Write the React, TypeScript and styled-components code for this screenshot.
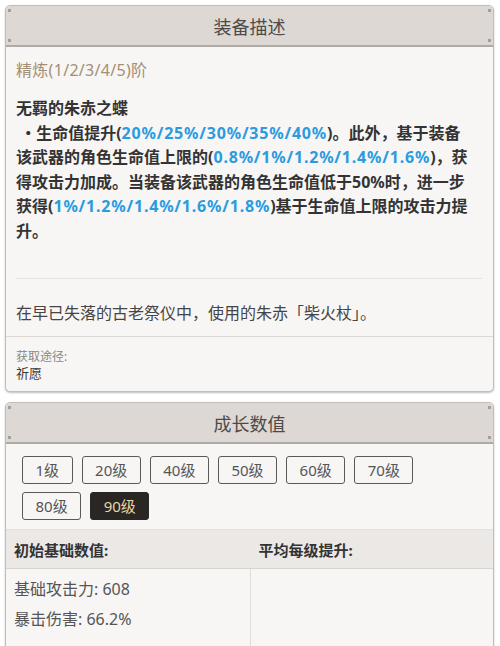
import React from 'react';
import styled, { createGlobalStyle } from 'styled-components';

const GlobalStyle = createGlobalStyle`
  body {
    margin: 0;
    background: #ffffff;
    font-family: "Noto Sans", "Noto Sans CJK SC", sans-serif;
  }
`;

const levels = ['1级', '20级', '40级', '50级', '60级', '70级', '80级', '90级'];
const activeLevel = '90级';

export default function App() {
  return (
    <>
      <GlobalStyle />
      <Page>
        <Card>
          <Header>
            <Corner $top $left />
            <Corner $left />
            <Corner $top />
            <Corner />
            装备描述
          </Header>
          <DescBody>
            <Refine>精炼(1/2/3/4/5)阶</Refine>
            <Effect>
              无羁的朱赤之蝶
              <br />
              &nbsp;・生命值提升(<Hl>20%/25%/30%/35%/40%</Hl>)。此外，基于装备
              <br />
              该武器的角色生命值上限的(<Hl>0.8%/1%/1.2%/1.4%/1.6%</Hl>)，获
              <br />
              得攻击力加成。当装备该武器的角色生命值低于50%时，进一步
              <br />
              获得(<Hl>1%/1.2%/1.4%/1.6%/1.8%</Hl>)基于生命值上限的攻击力提
              <br />
              升。
            </Effect>
            <Story>在早已失落的古老祭仪中，使用的朱赤「柴火杖」。</Story>
          </DescBody>
          <Source>
            <SourceLabel>获取途径:</SourceLabel>
            <SourceValue>祈愿</SourceValue>
          </Source>
        </Card>

        <Card>
          <Header>
            <Corner $top $left />
            <Corner $left />
            <Corner $top />
            <Corner />
            成长数值
          </Header>
          <Levels>
            {levels.map(l => (
              <LevelButton key={l} $active={l === activeLevel}>
                {l}
              </LevelButton>
            ))}
          </Levels>
          <StatTable>
            <StatHead>初始基础数值:</StatHead>
            <StatHead $right>平均每级提升:</StatHead>
            <StatCell>
              <StatLine>基础攻击力: 608</StatLine>
              <StatLine>暴击伤害: 66.2%</StatLine>
            </StatCell>
            <StatCell $right />
          </StatTable>
        </Card>
      </Page>
    </>
  );
}

const Page = styled.div`
  display: flex;
  flex-direction: column;
  gap: 10px;
  padding: 5px 6px 5px 5px;
`;

const Card = styled.div`
  background: #f7f6f5;
  border: 1px solid #c2bdb8;
  border-radius: 5px;
  overflow: hidden;
  box-shadow: 0 1px 2px rgba(0, 0, 0, 0.25);
`;

const Header = styled.div`
  position: relative;
  height: 39px;
  display: flex;
  align-items: center;
  justify-content: center;
  background: #ddd8d4;
  border-bottom: 2px solid #b0aaa5;
  font-size: 18px;
  color: #4e4a47;
`;

const Corner = styled.span<{ $top?: boolean; $left?: boolean }>`
  position: absolute;
  width: 3px;
  height: 3px;
  background: #a59f9a;
  ${p => (p.$top ? 'top: 3px;' : 'bottom: 3px;')}
  ${p => (p.$left ? 'left: 2px;' : 'right: 2px;')}
`;

const DescBody = styled.div`
  padding: 12px 11px 11px 10px;
`;

const Refine = styled.div`
  font-size: 16px;
  line-height: 22px;
  color: #a38f72;
  letter-spacing: 0.3px;
`;

const Effect = styled.div`
  margin-top: 15px;
  font-size: 16px;
  line-height: 24.5px;
  font-weight: 700;
  color: #333333;
  white-space: nowrap;
  padding-bottom: 35px;
  border-bottom: 1px solid #e6e3e0;
`;

const Hl = styled.span`
  color: #2b9be0;
  letter-spacing: 0.8px;
`;

const Story = styled.div`
  margin-top: 22px;
  font-size: 16px;
  line-height: 24px;
  color: #454545;
`;

const Source = styled.div`
  border-top: 1px solid #dcd8d4;
  padding: 12px 10px 10px;
`;

const SourceLabel = styled.div`
  font-size: 12px;
  line-height: 16px;
  color: #8c8884;
`;

const SourceValue = styled.div`
  font-size: 13px;
  line-height: 16px;
  color: #3a3a3a;
`;

const Levels = styled.div`
  display: flex;
  flex-wrap: wrap;
  gap: 8px 9px;
  padding: 12px 16px 9px;
`;

const LevelButton = styled.button<{ $active?: boolean }>`
  height: 28px;
  padding: 0 12.5px;
  border: 1px solid ${p => (p.$active ? '#2a2623' : '#5c5955')};
  border-radius: 3px;
  background: ${p => (p.$active ? '#2a2623' : 'transparent')};
  color: ${p => (p.$active ? '#e6d6a6' : '#555555')};
  font-family: "Noto Sans", "Noto Sans CJK SC", sans-serif;
  font-size: 15px;
  line-height: 26px;
`;

const StatTable = styled.div`
  display: grid;
  grid-template-columns: 1fr 1fr;
`;

const StatHead = styled.div<{ $right?: boolean }>`
  height: 38px;
  display: flex;
  align-items: center;
  padding-left: ${p => (p.$right ? '9px' : '8px')};
  background: #ebe8e6;
  border-top: 1px solid #e2dfdc;
  border-bottom: 1px solid #d8d4d0;
  font-size: 15px;
  font-weight: 700;
  color: #333333;
`;

const StatCell = styled.div<{ $right?: boolean }>`
  min-height: 72px;
  padding: 5px 8px 6px;
  border-left: ${p => (p.$right ? '1px solid #e0dcd8' : 'none')};
`;

const StatLine = styled.div`
  font-size: 16px;
  line-height: 30px;
  color: #555555;
`;
